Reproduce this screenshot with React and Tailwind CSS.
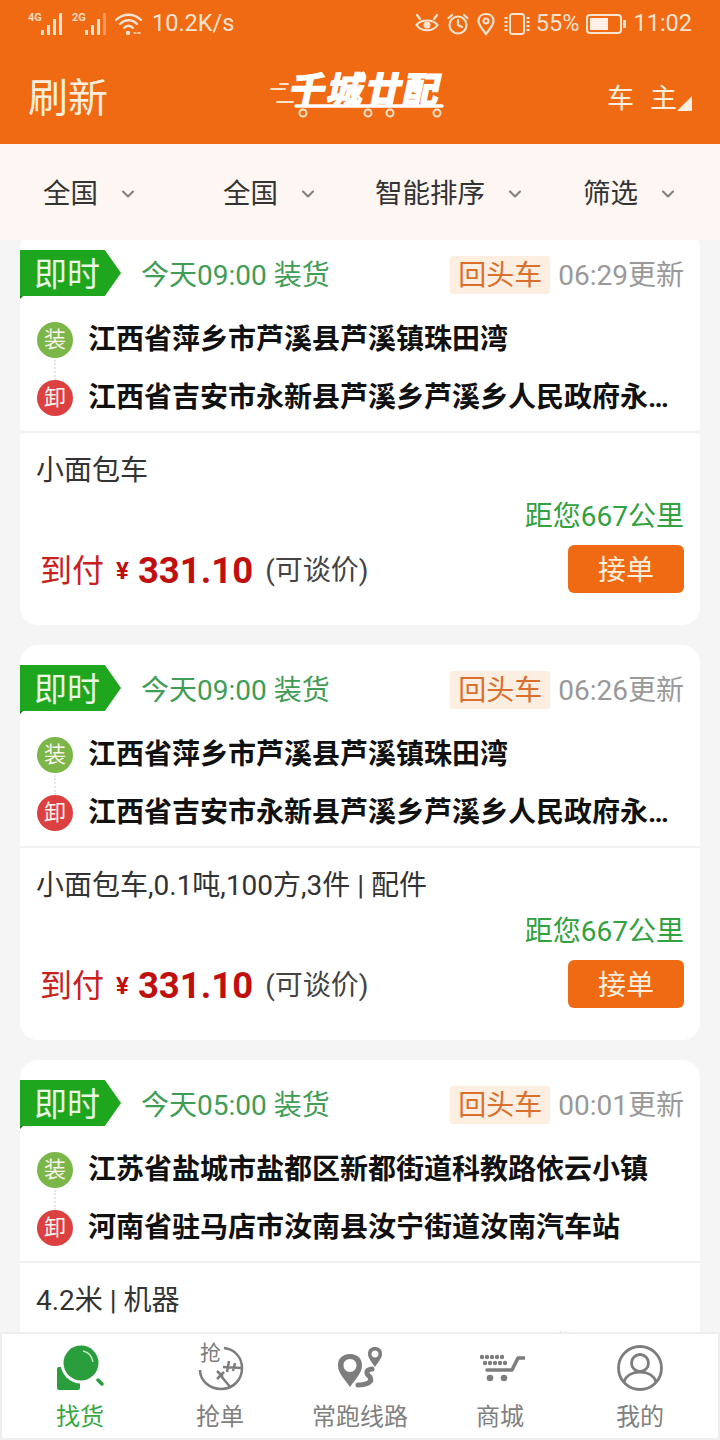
import React from "react";
import { ChevronDown } from "lucide-react";

const orders = [
  {
    id: 1,
    time: "今天09:00 装货",
    updated: "06:29更新",
    from: "江西省萍乡市芦溪县芦溪镇珠田湾",
    to: "江西省吉安市永新县芦溪乡芦溪乡人民政府永新县",
    cargo: "小面包车",
  },
  {
    id: 2,
    time: "今天09:00 装货",
    updated: "06:26更新",
    from: "江西省萍乡市芦溪县芦溪镇珠田湾",
    to: "江西省吉安市永新县芦溪乡芦溪乡人民政府永新县",
    cargo: "小面包车,0.1吨,100方,3件 | 配件",
  },
  {
    id: 3,
    time: "今天05:00 装货",
    updated: "00:01更新",
    from: "江苏省盐城市盐都区新都街道科教路依云小镇",
    to: "河南省驻马店市汝南县汝宁街道汝南汽车站",
    cargo: "4.2米 | 机器",
  },
];

function SignalIcon({ label, faint }) {
  return (
    <div className="relative h-[24px] w-[36px]">
      <span className="absolute left-0 top-0 text-[11px] font-bold leading-[12px] text-[#fbdcc0]">{label}</span>
      <svg className="absolute bottom-0 right-0" width="24" height="24" viewBox="0 0 24 24" fill="#fbe3cf">
        <rect x="1" y="18" width="3" height="5" />
        <rect x="7" y="13" width="3" height="10" />
        <rect x="13" y="7" width="3" height="16" />
        <rect x="19" y="1" width="3" height="22" opacity={faint ? 0.4 : 1} />
      </svg>
    </div>
  );
}

function StatusBar() {
  return (
    <div className="flex h-[48px] items-center justify-between pl-[28px] pr-[28px] text-[#fbe3cf]">
      <div className="flex items-center">
        <SignalIcon label="4G" />
        <div className="ml-[8px]">
          <SignalIcon label="2G" faint />
        </div>
        <svg className="ml-[7px]" width="28" height="24" viewBox="0 0 28 24" fill="none" stroke="#fbe3cf" strokeWidth="2.400" strokeLinecap="round">
          <path d="M1 8C8 1 19 1 26 8" />
          <path d="M5 12C10 7 17 7 22 12" />
          <path d="M9 16C12 13 15 13 18 16" />
          <circle cx="13" cy="21" r="2.200" fill="#fbe3cf" stroke="none" />
          <path d="M19 21H26" strokeWidth="1.500" strokeDasharray="2 2" />
        </svg>
        <span className="ml-[9px] text-[23.500px] leading-none">10.2K/s</span>
      </div>
      <div className="flex items-center">
        <svg width="24" height="22" viewBox="0 0 24 22" fill="none" stroke="#fbe3cf" strokeWidth="2.200">
          <path d="M1.500 12C6 6 18 6 22.500 12C18 19 6 19 1.500 12Z" />
          <circle cx="12" cy="12" r="3.500" fill="#fbe3cf" stroke="none" />
          <path d="M2 2L5 6M22 2L19 6" strokeLinecap="round" />
        </svg>
        <svg className="ml-[8px]" width="22" height="22" viewBox="0 0 22 22" fill="none" stroke="#fbe3cf" strokeWidth="2.200">
          <circle cx="11" cy="12" r="8.500" />
          <path d="M11 7V12L15 14M1.500 5L5 2M20.500 5L17 2" strokeLinecap="round" />
        </svg>
        <svg className="ml-[8px]" width="18" height="24" viewBox="0 0 18 24" fill="none" stroke="#fbe3cf" strokeWidth="2.200">
          <path d="M9 22C4.500 16 1.500 13 1.500 9C1.500 4.500 5 2 9 2C13 2 16.500 4.500 16.500 9C16.500 13 13.500 16 9 22Z" />
          <circle cx="9" cy="9" r="2.500" />
        </svg>
        <svg className="ml-[8px]" width="28" height="24" viewBox="0 0 28 24" fill="none" stroke="#fbe3cf" strokeWidth="2">
          <rect x="7" y="2" width="14" height="20" rx="2.500" />
          <path d="M3 5V19M25 5V19" strokeWidth="3" strokeDasharray="2 2" />
        </svg>
        <span className="ml-[5px] text-[23.500px] leading-none">55%</span>
        <svg className="ml-[7px]" width="40" height="20" viewBox="0 0 40 20">
          <rect x="1" y="1" width="34" height="18" rx="3" fill="none" stroke="#fbe3cf" strokeWidth="2" />
          <rect x="4" y="4" width="18" height="12" fill="#fdf0e6" />
          <rect x="37" y="6" width="3" height="8" fill="#fbe3cf" />
        </svg>
        <span className="ml-[7px] text-[23.500px] leading-none">11:02</span>
      </div>
    </div>
  );
}

function Logo() {
  return (
    <div className="relative h-[48px] w-[176px]">
      <svg className="absolute left-0 top-0" width="176" height="48" viewBox="0 0 176 48" fill="none" stroke="#fff" strokeLinecap="round">
        <path d="M10 10H18M1 15H15M7 28H23" strokeWidth="2" stroke="#fde2c8" />
        <path d="M26 32H172" strokeWidth="3.500" />
        <circle cx="33" cy="39" r="3.500" strokeWidth="2" stroke="#fde2c8" />
        <circle cx="98" cy="39" r="3.500" strokeWidth="2" stroke="#fde2c8" />
        <circle cx="120" cy="39" r="3.500" strokeWidth="2" stroke="#fde2c8" />
        <circle cx="167" cy="39" r="3.500" strokeWidth="2" stroke="#fde2c8" />
      </svg>
      <span className="absolute left-[20px] top-[-3px] -skew-x-12 whitespace-nowrap text-[36px] font-black leading-[40px] tracking-[2px] text-white [-webkit-text-stroke:1px_white]">
        千城廿配
      </span>
    </div>
  );
}

function Filter({ label, className }) {
  return (
    <div className={"flex items-center pt-[4px] " + className}>
      <span className="text-[27.500px] leading-none text-[#333]">{label}</span>
      <ChevronDown className="ml-[20px] text-[#808080]" size={20} strokeWidth={2.500} />
    </div>
  );
}

function RouteBadge({ text, color }) {
  return (
    <div className={"flex h-[36px] w-[36px] shrink-0 items-center justify-center rounded-full text-[22px] leading-none text-[#fdf3ee] " + color}>
      {text}
    </div>
  );
}

function OrderCard({ order }) {
  return (
    <div className="h-[395px] shrink-0 rounded-[18px] bg-white">
      <div className="box-content flex h-[46px] items-start pt-[20px]">
        <div className="relative">
          <div className="flex h-[46px] w-[101px] items-center bg-[#1fa61f] pl-[14px] pt-[2px] text-[33px] leading-none text-[#eaf6e6] [clip-path:polygon(0_0,84%_0,100%_50%,84%_100%,0_100%)]">
            即时
          </div>
          <div className="absolute left-0 top-[46px] h-0 w-0 border-b-[3px] border-l-[3px] border-b-transparent border-l-[#147a14]"></div>
        </div>
        <div className="ml-[20px] flex h-[46px] items-center pt-[5px] text-[28px] leading-none text-[#3f9d55]">{order.time}</div>
        <div className="ml-auto flex h-[46px] items-center pt-[4px] pr-[16px]">
          <span className="flex h-[38px] w-[100px] items-center justify-center rounded-[3px] bg-[#fdeee2] pt-[2px] text-[28px] leading-none text-[#d9702e]">
            回头车
          </span>
          <span className="ml-[8px] pt-[2px] text-[28px] leading-none text-[#999]">{order.updated}</span>
        </div>
      </div>

      <div className="relative mt-[26px] pl-[17px] pr-[16px]">
        <div className="absolute left-[34px] top-[38px] h-[20px] border-l-2 border-dotted border-[#e5e5e5]"></div>
        <div className="flex h-[36px] items-center">
          <RouteBadge text="装" color="bg-[#7ab648]" />
          <span className="ml-[15px] w-[586px] truncate text-[28px] font-bold leading-[36px] text-[#111]">{order.from}</span>
        </div>
        <div className="mt-[22px] flex h-[36px] items-center">
          <RouteBadge text="卸" color="bg-[#dd4040]" />
          <span className="ml-[15px] w-[586px] truncate text-[28px] font-bold leading-[36px] text-[#111]">{order.to}</span>
        </div>
      </div>

      <div className="mt-[15px] h-[2px] bg-[#f0f0f0]"></div>

      <div className="mt-[24px] pl-[16px] text-[28px] leading-[28px] text-[#333]">{order.cargo}</div>

      <div className="mt-[17px] pr-[16px] text-right text-[28px] leading-[30px] text-[#32a13f]">距您667公里</div>

      <div className="mt-[13px] flex h-[48px] items-center pl-[20px] pr-[16px]">
        <span className="pt-[4px] text-[32px] leading-none text-[#c8201c]">到付</span>
        <span className="ml-[12px] pt-[4px] text-[24px] font-bold leading-none text-[#c00f0f]">¥</span>
        <span className="ml-[9px] pt-[4px] text-[36.500px] font-bold leading-none text-[#c00f0f]">331.10</span>
        <span className="ml-[12px] pt-[4px] text-[28px] leading-none text-[#444]">(可谈价)</span>
        <button className="ml-auto flex h-[48px] w-[116px] items-center justify-center rounded-[6px] bg-[#f06a14] pt-[3px] text-[28px] leading-none text-[#fdeedd]">
          接单
        </button>
      </div>
    </div>
  );
}

function NavIcon({ name }) {
  if (name === "find") {
    return (
      <svg width="50" height="48" viewBox="0 0 50 48">
        <rect x="2" y="23" width="23" height="23" rx="2" fill="#2a9d3c" />
        <circle cx="26" cy="19" r="20.500" fill="#fff" />
        <circle cx="26" cy="19" r="17.500" fill="#2a9d3c" />
        <path d="M28 7C33 8 37 12 38 18" fill="none" stroke="#c8eec8" strokeWidth="1.500" />
        <path d="M43 36L47 40" stroke="#2a9d3c" strokeWidth="3.500" strokeLinecap="round" />
      </svg>
    );
  }
  if (name === "grab") {
    return (
      <div className="relative h-[48px] w-[50px]">
        <svg className="absolute left-0 top-0" width="50" height="48" viewBox="0 0 50 48" fill="none" stroke="#7d7d7d" strokeWidth="2.500">
          <path d="M29 4C39 5 47 13 47 24C47 36 38 45 26 45C14 45 5 36 5 26" />
          <path d="M26 32L36 44M28 33L22 27M22 35L29 28M28 23L46 24M34 17L32 28M40 19L38 27" />
        </svg>
        <span className="absolute left-[5px] top-[-1px] text-[21px] leading-none text-[#7d7d7d]">抢</span>
      </div>
    );
  }
  if (name === "route") {
    return (
      <svg width="50" height="48" viewBox="0 -2 50 48">
        <path fillRule="evenodd" d="M15 41C8 31 3 27 3 19C3 12 8 8 15 8C22 8 27 12 27 19C27 27 22 31 15 41ZM15 13C11 13 8.500 16 8.500 19C8.500 23 11 26 15 26C19 26 21.500 23 21.500 19C21.500 16 19 13 15 13Z" fill="#7d7d7d" />
        <path fillRule="evenodd" d="M40 21C36 15 33 12 33 8C33 3 36 1 40 1C44 1 47 3 47 8C47 12 44 15 40 21ZM40 4.500C38 4.500 36.500 6 36.500 8C36.500 10 38 11.500 40 11.500C42 11.500 43.500 10 43.500 8C43.500 6 42 4.500 40 4.500Z" fill="#7d7d7d" />
        <path d="M37 23C30 24 31 28 35 31C38 36 32 39 23 39" fill="none" stroke="#7d7d7d" strokeWidth="5" strokeLinecap="round" />
      </svg>
    );
  }
  if (name === "shop") {
    return (
      <svg width="50" height="48" viewBox="0 0 50 48" fill="#7d7d7d">
        {[7, 12, 17, 22, 27].map((x) => (
          <circle key={x} cx={x} cy="13" r="2.200" />
        ))}
        {[10, 15, 20, 25, 30].map((x) => (
          <circle key={x} cx={x} cy="19" r="2.200" />
        ))}
        <path d="M12 26H37L43 14H50" fill="none" stroke="#7d7d7d" strokeWidth="3.500" strokeLinecap="round" strokeLinejoin="round" />
        <circle cx="15" cy="34" r="3.300" />
        <circle cx="29" cy="34" r="3.300" />
      </svg>
    );
  }
  return (
    <svg width="48" height="48" viewBox="0 0 48 48" fill="none" stroke="#7d7d7d" strokeWidth="2.800">
      <circle cx="24" cy="24" r="21.500" />
      <circle cx="24" cy="19" r="8.500" />
      <path d="M8 38C10 31 17 28 24 28C31 28 38 31 40 38" />
    </svg>
  );
}

function BottomNav() {
  const items = [
    { key: "find", label: "找货", active: true },
    { key: "grab", label: "抢单" },
    { key: "route", label: "常跑线路" },
    { key: "shop", label: "商城" },
    { key: "me", label: "我的" },
  ];
  return (
    <div className="grid h-[108px] shrink-0 grid-cols-5 border-2 border-[#eeeeee] bg-white px-[8px]">
      {items.map((item) => (
        <div key={item.key} className="flex flex-col items-center pt-[10px]">
          <div className="flex h-[48px] items-center justify-center">
            <NavIcon name={item.key} />
          </div>
          <span className={"mt-[13px] whitespace-nowrap text-[24px] leading-none " + (item.active ? "text-[#35a83f]" : "text-[#808080]")}>
            {item.label}
          </span>
        </div>
      ))}
    </div>
  );
}

export default function App() {
  return (
    <div className="flex h-[1440px] w-[720px] flex-col overflow-hidden bg-[#f5f5f5] font-['Roboto','Noto_Sans_CJK_SC',sans-serif]">
      <div className="h-[144px] shrink-0 bg-[#f06a14]">
        <StatusBar />
        <div className="flex h-[96px] items-center pl-[28px] pr-[28px]">
          <span className="pt-[6px] text-[40px] leading-none text-[#fdeedd]">刷新</span>
          <div className="ml-[162px] pt-[4px]">
            <Logo />
          </div>
          <div className="ml-auto flex items-end pt-[6px]">
            <span className="text-[27px] leading-none tracking-[16px] text-[#fdeedd]">车主</span>
            <span className="mb-[2px] ml-[-16px] h-0 w-0 border-b-[15px] border-l-[15px] border-b-[#fdeedd] border-l-transparent"></span>
          </div>
        </div>
      </div>

      <div className="flex h-[96px] shrink-0 items-center bg-[#fdf6f2]">
        <Filter label="全国" className="w-[180px] pl-[43px]" />
        <Filter label="全国" className="w-[152px] pl-[43px]" />
        <Filter label="智能排序" className="w-[208px] pl-[43px]" />
        <Filter label="筛选" className="pl-[43px]" />
      </div>

      <div className="min-h-0 flex-1 overflow-hidden px-[20px]">
        <div className="-mt-[10px] flex flex-col gap-[20px]">
          {orders.map((order) => (
            <OrderCard key={order.id} order={order} />
          ))}
        </div>
      </div>

      <BottomNav />
    </div>
  );
}
